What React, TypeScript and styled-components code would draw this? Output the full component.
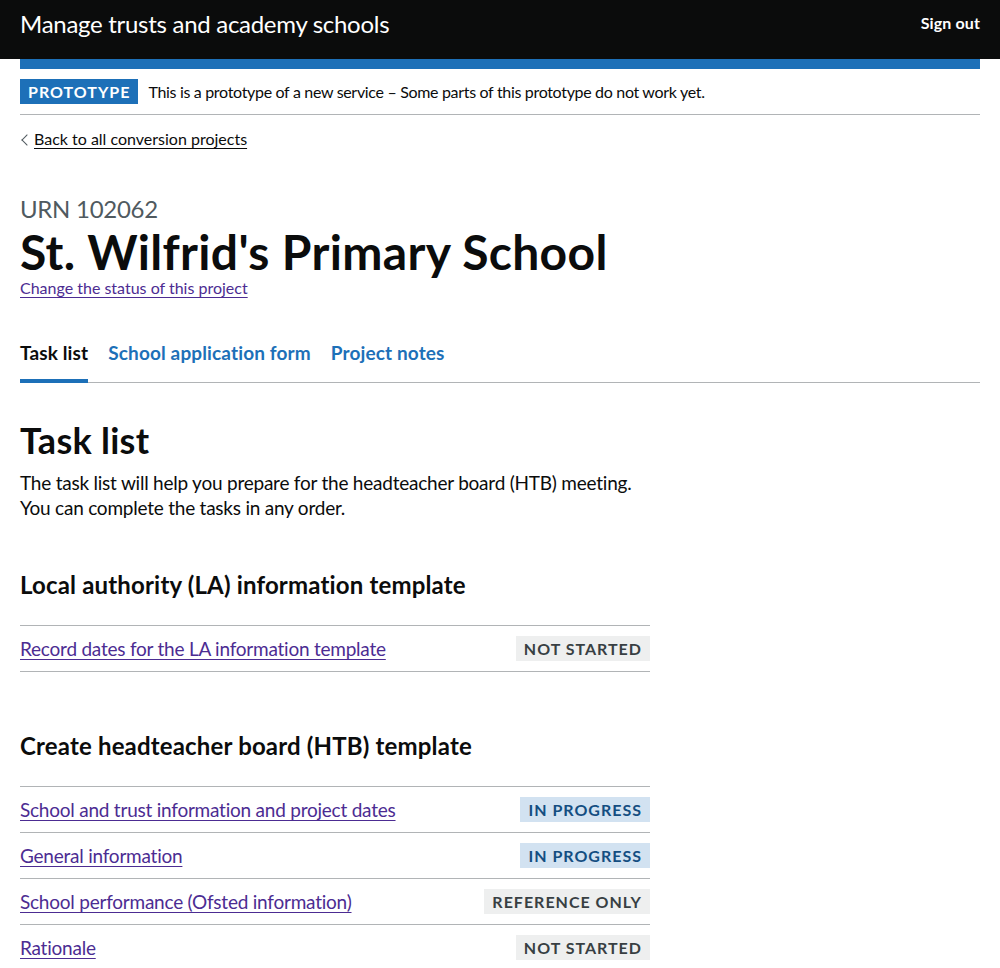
import React from "react";
import styled, { createGlobalStyle, css } from "styled-components";

const GlobalStyle = createGlobalStyle`
  html, body {
    margin: 0;
    padding: 0;
    background: #ffffff;
  }
  body {
    font-family: Lato, "Liberation Sans", Arial, sans-serif;
    color: #0b0c0c;
    -webkit-font-smoothing: antialiased;
  }
  * { box-sizing: border-box; }
`;

const regular = css`
  font-weight: 400;
  letter-spacing: -0.012em;
`;

const bold = css`
  font-weight: 700;
  letter-spacing: 0.007em;
`;

const Header = styled.header`
  background: #0b0c0c;
`;

const HeaderInner = styled.div`
  margin: 0 20px;
  height: 59px;
  padding-top: 9px;
  display: flex;
  align-items: flex-start;
  justify-content: space-between;
`;

const ServiceName = styled.a`
  ${regular};
  color: #ffffff;
  font-size: 24px;
  line-height: 30px;
  text-decoration: none;
`;

const HeaderLink = styled.a`
  ${bold};
  color: #ffffff;
  font-size: 16px;
  line-height: 20px;
  margin-top: 4px;
  text-decoration: none;
`;

const Container = styled.div`
  margin: 0 20px;
`;

const BlueRule = styled.div`
  height: 10px;
  background: #1d70b8;
`;

const PhaseBanner = styled.div`
  display: flex;
  align-items: center;
  gap: 10px;
  padding: 10px 0;
  border-bottom: 1px solid #b1b4b6;
`;

type TagTone = "blue" | "grey" | "solid";

const tagColours: Record<TagTone, { bg: string; fg: string }> = {
  solid: { bg: "#1d70b8", fg: "#ffffff" },
  blue: { bg: "#d2e2f1", fg: "#144e81" },
  grey: { bg: "#eeefef", fg: "#383f43" },
};

const Tag = styled.strong<{ $tone: TagTone }>`
  display: inline-block;
  flex: none;
  padding: 5px 8px 4px;
  font-size: 16px;
  line-height: 16px;
  font-weight: 700;
  letter-spacing: 1px;
  text-transform: uppercase;
  background: ${(p) => tagColours[p.$tone].bg};
  color: ${(p) => tagColours[p.$tone].fg};
`;

const PhaseText = styled.span`
  ${regular};
  letter-spacing: -0.02em;
  font-size: 16px;
  line-height: 20px;
`;

const BackLink = styled.a`
  ${regular};
  position: relative;
  display: inline-block;
  margin: 14px 0 15px;
  padding-left: 14px;
  font-size: 16px;
  line-height: 20px;
  letter-spacing: 0;
  color: #0b0c0c;
  text-decoration: underline;
  text-decoration-thickness: 1px;
  text-underline-offset: 0.16em;

  &::before {
    content: "";
    position: absolute;
    left: 3px;
    top: 7px;
    width: 7px;
    height: 7px;
    border-style: solid;
    border-color: #505a5f;
    border-width: 1px 1px 0 0;
    transform: rotate(225deg);
  }
`;

const Main = styled.main`
  padding-top: 30px;
`;

const Caption = styled.span`
  ${regular};
  display: block;
  margin-bottom: 3px;
  font-size: 24px;
  line-height: 30px;
  color: #505a5f;
`;

const PageTitle = styled.h1`
  ${bold};
  margin: 0 0 1px;
  font-size: 48px;
  line-height: 50px;
`;

const VisitedLink = styled.a`
  ${regular};
  color: #4c2c92;
  text-decoration: underline;
  text-decoration-thickness: 1px;
  text-underline-offset: 0.16em;
`;

const SmallLink = styled(VisitedLink)`
  display: inline-block;
  font-size: 16px;
  line-height: 20px;
  letter-spacing: 0;
`;

const SubNav = styled.nav`
  margin-top: 42px;
  border-bottom: 1px solid #b1b4b6;
`;

const SubNavList = styled.ul`
  list-style: none;
  margin: 0;
  padding: 0;
  display: flex;
  gap: 20px;
`;

const SubNavItem = styled.li<{ $active?: boolean }>`
  padding-bottom: 14px;
  border-bottom: 4px solid ${(p) => (p.$active ? "#1d70b8" : "transparent")};
  margin-bottom: -1px;
`;

const SubNavLink = styled.a<{ $active?: boolean }>`
  ${bold};
  font-size: 19px;
  line-height: 25px;
  text-decoration: none;
  color: ${(p) => (p.$active ? "#0b0c0c" : "#1d70b8")};
`;

const Column = styled.div`
  width: 630px;
`;

const SectionHeading = styled.h2`
  ${bold};
  margin: 37px 0 10px;
  font-size: 36px;
  line-height: 40px;
`;

const Body = styled.p`
  ${regular};
  margin: 0 0 50px;
  font-size: 19px;
  line-height: 25px;
`;

const TaskSection = styled.section`
  margin-bottom: 59px;
`;

const TaskHeading = styled.h3`
  ${bold};
  margin: 0 0 25px;
  font-size: 24px;
  line-height: 30px;
`;

const TaskList = styled.ul`
  list-style: none;
  margin: 0;
  padding: 0;
  border-top: 1px solid #b1b4b6;
`;

const TaskRow = styled.li`
  display: flex;
  align-items: center;
  justify-content: space-between;
  gap: 20px;
  padding: 10px 0;
  border-bottom: 1px solid #b1b4b6;
`;

const TaskLink = styled(VisitedLink)`
  font-size: 19px;
  line-height: 25px;
`;

type Task = { name: string; status: string; tone: TagTone };

const sections: { title: string; tasks: Task[] }[] = [
  {
    title: "Local authority (LA) information template",
    tasks: [
      { name: "Record dates for the LA information template", status: "Not started", tone: "grey" },
    ],
  },
  {
    title: "Create headteacher board (HTB) template",
    tasks: [
      { name: "School and trust information and project dates", status: "In progress", tone: "blue" },
      { name: "General information", status: "In progress", tone: "blue" },
      { name: "School performance (Ofsted information)", status: "Reference only", tone: "grey" },
      { name: "Rationale", status: "Not started", tone: "grey" },
    ],
  },
];

export default function App() {
  return (
    <>
      <GlobalStyle />
      <Header>
        <HeaderInner>
          <ServiceName href="#">Manage trusts and academy schools</ServiceName>
          <HeaderLink href="#">Sign out</HeaderLink>
        </HeaderInner>
      </Header>
      <Container>
        <BlueRule />
        <PhaseBanner>
          <Tag $tone="solid">Prototype</Tag>
          <PhaseText>This is a prototype of a new service – Some parts of this prototype do not work yet.</PhaseText>
        </PhaseBanner>
        <BackLink href="#">Back to all conversion projects</BackLink>
        <Main>
          <Caption>URN 102062</Caption>
          <PageTitle>St. Wilfrid's Primary School</PageTitle>
          <SmallLink href="#">Change the status of this project</SmallLink>
          <SubNav>
            <SubNavList>
              <SubNavItem $active>
                <SubNavLink $active href="#">Task list</SubNavLink>
              </SubNavItem>
              <SubNavItem>
                <SubNavLink href="#">School application form</SubNavLink>
              </SubNavItem>
              <SubNavItem>
                <SubNavLink href="#">Project notes</SubNavLink>
              </SubNavItem>
            </SubNavList>
          </SubNav>
          <Column>
            <SectionHeading>Task list</SectionHeading>
            <Body>
              The task list will help you prepare for the headteacher board (HTB) meeting.
              <br />
              You can complete the tasks in any order.
            </Body>
            {sections.map((s) => (
              <TaskSection key={s.title}>
                <TaskHeading>{s.title}</TaskHeading>
                <TaskList>
                  {s.tasks.map((t) => (
                    <TaskRow key={t.name}>
                      <TaskLink href="#">{t.name}</TaskLink>
                      <Tag $tone={t.tone}>{t.status}</Tag>
                    </TaskRow>
                  ))}
                </TaskList>
              </TaskSection>
            ))}
          </Column>
        </Main>
      </Container>
    </>
  );
}
